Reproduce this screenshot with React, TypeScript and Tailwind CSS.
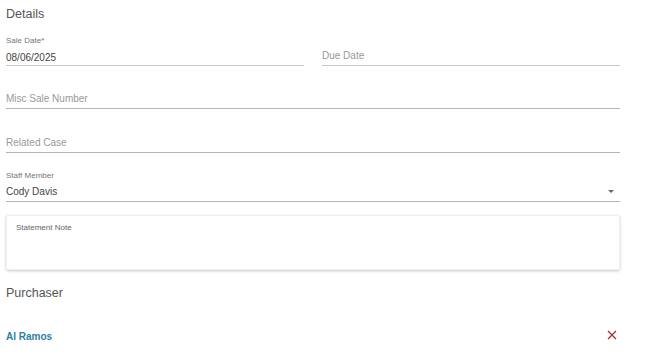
export default function App() {
  const font = { fontFamily: '"Liberation Sans", Arial, sans-serif' };

  return (
    <div className="w-[663px] h-[354px] bg-white overflow-hidden" style={font}>
      <div className="ml-[6px] w-[614px] pt-[6px]">
        {/* Details */}
        <h2 className="text-[12.5px] leading-[16px] text-[#555]">Details</h2>

        <div className="flex gap-[18px] mt-[1px]">
          <div className="flex-1 h-[43px] flex flex-col justify-end border-b border-[#c8c8c8]">
            <div className="text-[8px] leading-[12px] text-[#777]">Sale Date*</div>
            <div className="mt-[4px] text-[10px] leading-[14px] text-[#444]">08/06/2025</div>
          </div>
          <div className="flex-1 h-[43px] flex flex-col justify-end border-b border-[#c8c8c8]">
            <div className="pb-[2px] text-[10px] leading-[14px] text-[#999]">Due Date</div>
          </div>
        </div>

        <div className="h-[43px] flex flex-col justify-end border-b border-[#b4b4b4]">
          <div className="pb-[2px] text-[10px] leading-[14px] text-[#999]">Misc Sale Number</div>
        </div>

        <div className="h-[44px] flex flex-col justify-end border-b border-[#b4b4b4]">
          <div className="pb-[2px] text-[10px] leading-[14px] text-[#999]">Related Case</div>
        </div>

        <div className="h-[49px] flex flex-col justify-end border-b border-[#b4b4b4]">
          <div className="text-[8px] leading-[12px] text-[#777]">Staff Member</div>
          <div className="mt-[3px] pb-[2px] flex items-center justify-between text-[10px] leading-[14px] text-[#444]">
            <span>Cody Davis</span>
            <svg width="6" height="4" viewBox="0 0 6 4" className="mr-[6px]">
              <path d="M0 0h6L3 3z" fill="#666" />
            </svg>
          </div>
        </div>

        {/* Statement Note */}
        <div className="mt-[13px] h-[55px] rounded-[2px] border border-[#f0f0f0] shadow-[0_1px_3px_rgba(0,0,0,0.22)] pl-[9px] pt-[6px]">
          <div className="text-[8px] leading-[12px] text-[#666]">Statement Note</div>
        </div>

        {/* Purchaser */}
        <h2 className="mt-[15px] text-[12.5px] leading-[16px] text-[#555]">Purchaser</h2>

        <div className="mt-[29px] flex items-center justify-between">
          <span className="text-[10px] leading-[14px] font-bold text-[#2e7ea3]">Al Ramos</span>
          <svg width="10" height="10" viewBox="0 0 10 10" className="mr-[3px] -mt-[5px]">
            <path d="M1 1l8 8M9 1l-8 8" stroke="#a3302a" strokeWidth="1.3" />
          </svg>
        </div>
      </div>
    </div>
  );
}
